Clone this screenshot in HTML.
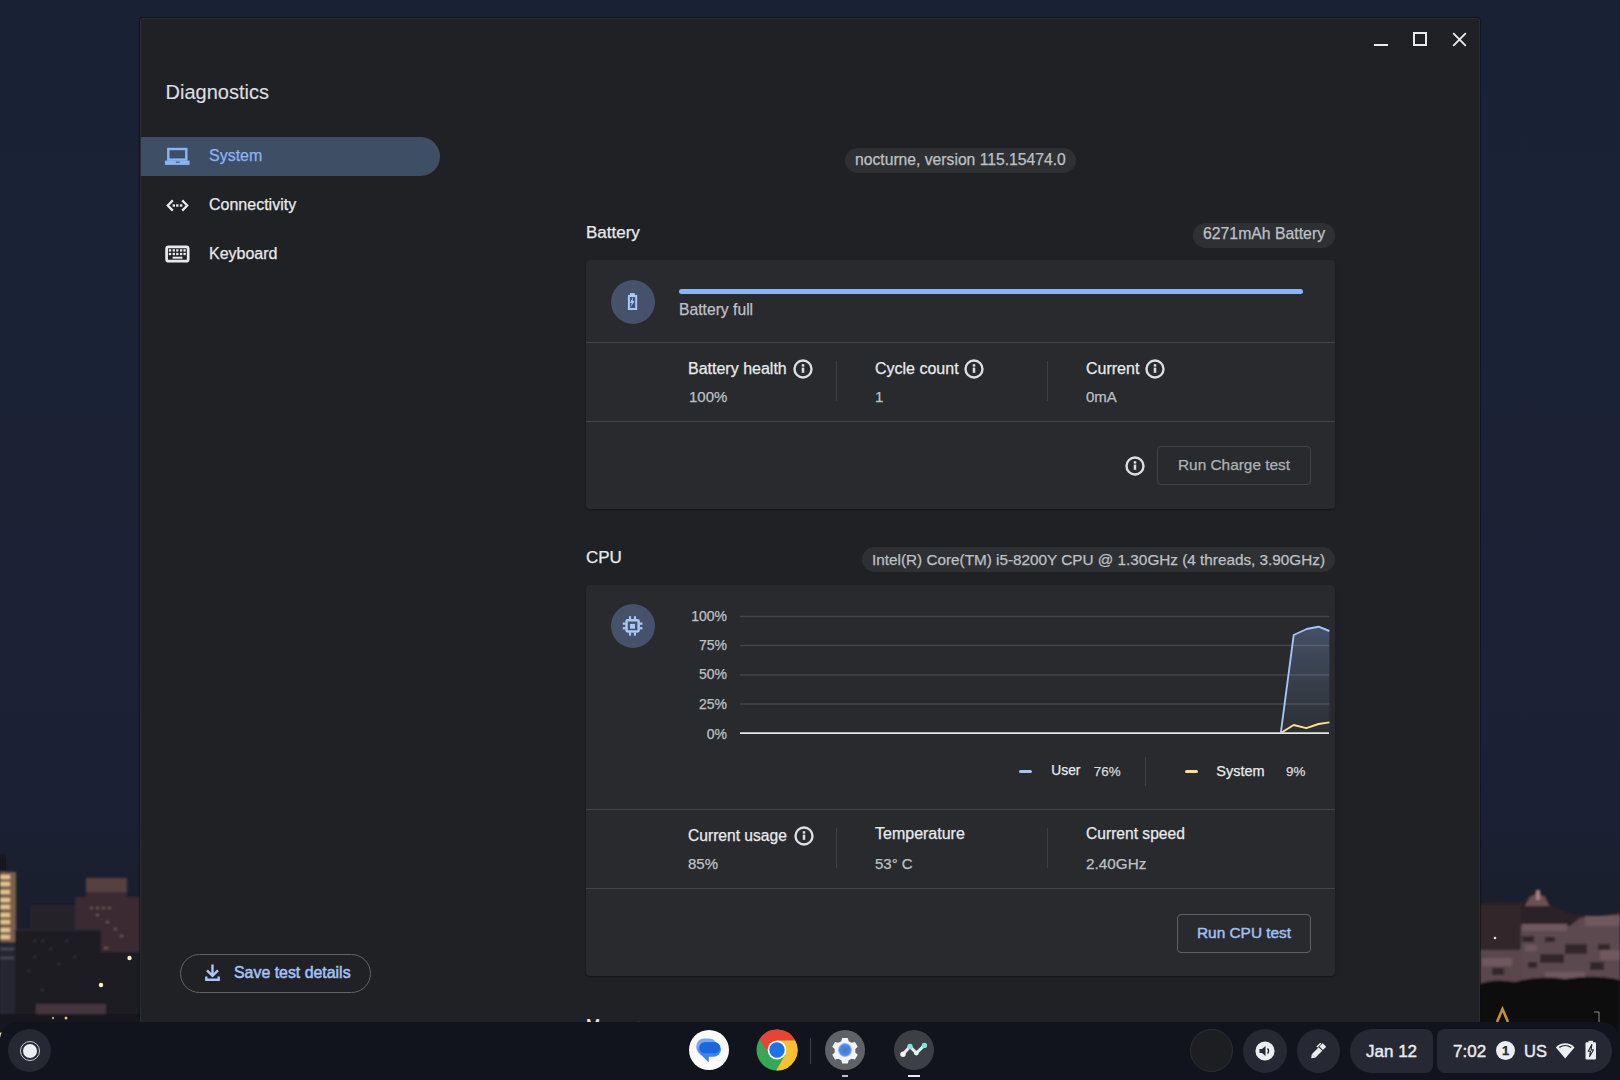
<!DOCTYPE html>
<html><head><meta charset="utf-8">
<style>
*{box-sizing:border-box;margin:0;padding:0}
html,body{width:1620px;height:1080px;overflow:hidden}
body{position:relative;font-family:"Liberation Sans",sans-serif;background:linear-gradient(180deg,#192135 0%,#1a2234 45%,#1b2134 75%,#1a1f2e 82%);}
.a{position:absolute}
.t{position:absolute;white-space:nowrap;line-height:1.2;-webkit-text-stroke:0.25px currentColor}
#win{position:absolute;left:140px;top:18px;width:1340px;height:1062px;background:#202124;border:1px solid #2b2d33;border-bottom:none;border-radius:3px 3px 0 0;box-shadow:0 0 1px 1px rgba(10,12,20,.6)}
.card{position:absolute;left:586px;width:749px;background:#292a2d;border-radius:4px;box-shadow:0 1px 2px rgba(0,0,0,.4)}
.chip{position:absolute;height:25px;border-radius:13px;background:#2f3034}
.hr{position:absolute;height:1.3px;background:#434448}
.vr{position:absolute;width:1.2px;background:#3f4044}
.shelf{position:absolute;left:0;top:1022px;width:1620px;height:58px;background:#11131d;border-radius:18px 18px 0 0}
.circ{position:absolute;border-radius:50%}
</style></head>
<body>

<svg class="a" style="left:0;top:840px" width="141" height="210" viewBox="0 840 141 210">
<defs><filter id="bl" x="-10%" y="-10%" width="120%" height="120%"><feGaussianBlur stdDeviation="0.9"/></filter></defs>
<g filter="url(#bl)">
<rect x="0" y="855" width="6" height="18" fill="#12161f"/>
<rect x="0" y="872" width="16" height="70" fill="#7a6048"/>
<g fill="#e6c690"><rect x="0" y="875" width="10" height="4"/><rect x="0" y="882" width="10" height="4"/><rect x="0" y="890" width="10" height="4"/><rect x="0" y="898" width="10" height="4"/><rect x="0" y="905" width="10" height="4"/><rect x="0" y="913" width="10" height="4"/><rect x="0" y="920" width="10" height="4"/><rect x="0" y="928" width="10" height="4"/><rect x="0" y="935" width="10" height="4"/></g>
<rect x="0" y="942" width="16" height="80" fill="#262833"/>
<g fill="#4a4c58"><rect x="0" y="948" width="14" height="2"/><rect x="0" y="957" width="14" height="2"/></g>
<rect x="30" y="905" width="48" height="30" fill="#27232c"/>
<path d="M75 1010V897H86V878H127V897H141V1010Z" fill="#3a2b31"/>
<rect x="86" y="878" width="41" height="14" fill="#57413f"/>
<g fill="#6e5650"><rect x="90" y="907" width="3" height="2"/><rect x="96" y="907" width="3" height="2"/><rect x="102" y="907" width="3" height="2"/><rect x="108" y="907" width="3" height="2"/><rect x="96" y="914" width="3" height="2"/><rect x="106" y="921" width="3" height="2"/><rect x="114" y="928" width="3" height="2"/><rect x="104" y="947" width="4" height="2"/><rect x="120" y="935" width="3" height="2"/></g>
<rect x="15" y="929" width="86" height="85" fill="#1d1b23"/>
<rect x="15" y="929" width="86" height="2" fill="#2a2630"/>
<g fill="#34303a"><rect x="33" y="940" width="3" height="2"/><rect x="41" y="940" width="3" height="2"/><rect x="49" y="948" width="3" height="2"/><rect x="33" y="956" width="3" height="2"/><rect x="57" y="963" width="3" height="2"/><rect x="41" y="989" width="3" height="2"/><rect x="27" y="970" width="3" height="2"/><rect x="65" y="940" width="3" height="2"/><rect x="73" y="956" width="3" height="2"/></g>
<rect x="101" y="952" width="40" height="62" fill="#1c1a21"/>
<rect x="36" y="1004" width="70" height="10" fill="#45363d"/>
<rect x="0" y="1014" width="141" height="36" fill="#15131a"/>
</g>
<circle cx="129.5" cy="958" r="2.2" fill="#fff1c0"/><circle cx="101" cy="985" r="2.2" fill="#fff1c0"/>
<circle cx="66" cy="1018" r="1.5" fill="#e8c070"/><circle cx="53" cy="1018" r="1.2" fill="#c8a060"/><circle cx="1" cy="1035" r="2.5" fill="#f5e0b0"/>
</svg>
<svg class="a" style="left:1479px;top:860px" width="141" height="190" viewBox="1479 860 141 190">
<defs><filter id="br" x="-10%" y="-10%" width="120%" height="120%"><feGaussianBlur stdDeviation="1.1"/></filter></defs>
<g filter="url(#br)">
<path d="M1479 1050V903L1522 902L1528 896L1536 892L1546 896L1552 906L1572 914L1600 917L1620 911V1050Z" fill="#2a2127"/>
<path d="M1525 906L1530 897L1538 893L1545 897L1549 906Z" fill="#6a5052"/>
<rect x="1536" y="890" width="4" height="10" fill="#a88080"/>
<path d="M1520 926H1570L1580 918L1620 914V982H1520Z" fill="#5c4850"/>
<path d="M1479 950H1522V984H1479Z" fill="#5a474e"/>
<g fill="#70595f"><rect x="1522" y="924" width="45" height="7"/><rect x="1585" y="916" width="35" height="10"/><rect x="1482" y="958" width="30" height="8"/><rect x="1545" y="972" width="40" height="7"/><rect x="1600" y="950" width="20" height="10"/><rect x="1525" y="945" width="12" height="6"/></g>
<g fill="#30262c"><rect x="1522" y="936" width="12" height="6"/><rect x="1545" y="937" width="10" height="5"/><rect x="1565" y="944" width="22" height="10"/><rect x="1540" y="954" width="24" height="9"/><rect x="1598" y="944" width="12" height="6"/><rect x="1492" y="968" width="12" height="7"/><rect x="1528" y="962" width="9" height="6"/><rect x="1590" y="962" width="14" height="8"/><rect x="1479" y="905" width="42" height="44"/></g>
<path d="M1479 1050V984Q1495 978 1515 982Q1540 975 1565 979Q1595 974 1620 980V1050Z" fill="#0e0c10"/>
</g>
<circle cx="1495" cy="938" r="1.3" fill="#f0e0d0"/>
<path d="M1497 1022L1502.5 1009L1508 1022" fill="none" stroke="#c8902a" stroke-width="2.6"/>
<path d="M1594 1012H1599V1022" fill="none" stroke="#8a8a90" stroke-width="1"/>
</svg>
<div id="win"></div>
<div class="a" style="left:1374px;top:44px;width:14px;height:2px;background:#e8eaed"></div>
<div class="a" style="left:1413px;top:32px;width:14px;height:14px;border:2px solid #e8eaed"></div>
<svg class="a" style="left:1450px;top:30px" width="18" height="18" viewBox="0 0 18 18"><path d="M3.2 3.2L15.8 15.8M15.8 3.2L3.2 15.8" stroke="#e8eaed" stroke-width="1.9"/></svg>
<div class="t" style="left:165.5px;top:79.77px;font-size:20px;color:#dcdee1;-webkit-text-stroke:0.15px">Diagnostics</div>
<div class="a" style="left:141px;top:137px;width:299px;height:39px;background:#3e4e64;border-radius:0 20px 20px 0"></div>
<svg class="a" style="left:160px;top:140px" width="35" height="35" viewBox="0 0 35 35"><rect x="8.3" y="9" width="18" height="10.6" fill="none" stroke="#8ab4f8" stroke-width="2.4"/><rect x="4.9" y="20.6" width="24.7" height="4.3" fill="#8ab4f8"/><rect x="15.9" y="21.6" width="3.9" height="1.1" fill="#3e4e64"/></svg>
<div class="t" style="left:209px;top:146.46px;font-size:16px;color:#8ab4f8;">System</div>
<svg class="a" style="left:160px;top:187px" width="35" height="35" viewBox="0 0 35 35"><path d="M12.8 13.4L7.8 18.5L12.8 23.6M22.2 13.4L27.2 18.5L22.2 23.6" fill="none" stroke="#e8eaed" stroke-width="2.3"/><rect x="12.6" y="17.3" width="2.4" height="2.4" fill="#e8eaed"/><rect x="16.1" y="17.3" width="2.4" height="2.4" fill="#e8eaed"/><rect x="19.9" y="17.3" width="2.4" height="2.4" fill="#e8eaed"/></svg>
<div class="t" style="left:209px;top:195.46px;font-size:16px;color:#e8eaed;">Connectivity</div>
<svg class="a" style="left:160px;top:236px" width="35" height="35" viewBox="0 0 35 35"><rect x="6.6" y="10.8" width="21.6" height="14.4" rx="2" fill="none" stroke="#e8eaed" stroke-width="2.7"/><g fill="#e8eaed"><rect x="8.85" y="13.25" width="2.3" height="2.3"/><rect x="12.65" y="13.25" width="2.3" height="2.3"/><rect x="16.15" y="13.25" width="2.3" height="2.3"/><rect x="19.95" y="13.25" width="2.3" height="2.3"/><rect x="23.45" y="13.25" width="2.3" height="2.3"/><rect x="8.85" y="16.85" width="2.3" height="2.3"/><rect x="12.65" y="16.85" width="2.3" height="2.3"/><rect x="16.15" y="16.85" width="2.3" height="2.3"/><rect x="19.95" y="16.85" width="2.3" height="2.3"/><rect x="23.45" y="16.85" width="2.3" height="2.3"/><rect x="12.6" y="20.7" width="9.8" height="2"/></g></svg>
<div class="t" style="left:209px;top:244.26px;font-size:16px;color:#e8eaed;">Keyboard</div>
<div class="chip" style="left:845px;top:148px;width:231px"></div>
<div class="t" style="left:855px;top:150.54px;font-size:15.7px;color:#bdc1c6;">nocturne, version 115.15474.0</div>
<div class="t" style="left:586px;top:223.31px;font-size:17px;color:#e8eaed;">Battery</div>
<div class="chip" style="left:1193px;top:223px;width:142px"></div>
<div class="t" style="left:1203px;top:225.05px;font-size:15.8px;color:#bdc1c6;">6271mAh Battery</div>
<div class="card" style="top:260px;height:249px"></div>
<div class="circ" style="left:611px;top:280px;width:44px;height:44px;background:#45526a"></div>
<svg class="a" style="left:621px;top:291px" width="20" height="22" viewBox="0 0 20 22"><path d="M6.9 4.9h9.3v13.1H6.9z" fill="#3a5680" fill-opacity=".35"/><path d="M7.9 4.9h7.3v13.1h-7.3z" fill="none" stroke="#a8c7fa" stroke-width="2"/><rect x="8.9" y="2.1" width="5" height="2.3" fill="#a8c7fa"/><path d="M12.2 5.8L8.9 11.9H10.8L9.4 16.6L13.6 9.9H11.6z" fill="#a8c7fa"/></svg>
<div class="a" style="left:679px;top:289px;width:624px;height:5px;border-radius:3px;background:#8ab4f8"></div>
<div class="t" style="left:679px;top:301.14px;font-size:15.7px;color:#bdc1c6;">Battery full</div>
<div class="hr" style="left:586px;top:342px;width:749px"></div>
<div class="t" style="left:688px;top:358.76px;font-size:16px;color:#e8eaed;">Battery health</div>
<svg class="a" style="left:792.7px;top:358.6px" width="20" height="20" viewBox="0 0 20 20"><circle cx="10" cy="10" r="8.5" fill="none" stroke="#dcdee2" stroke-width="2.4"/><rect x="8.75" y="8.6" width="2.5" height="5.2" fill="#dcdee2"/><rect x="8.75" y="5.2" width="2.5" height="2.4" fill="#dcdee2"/></svg>
<div class="t" style="left:689px;top:387.50px;font-size:15px;color:#bdc1c6;">100%</div>
<div class="vr" style="left:836px;top:361px;height:40px"></div>
<div class="t" style="left:875px;top:358.76px;font-size:16px;color:#e8eaed;">Cycle count</div>
<svg class="a" style="left:964px;top:358.6px" width="20" height="20" viewBox="0 0 20 20"><circle cx="10" cy="10" r="8.5" fill="none" stroke="#dcdee2" stroke-width="2.4"/><rect x="8.75" y="8.6" width="2.5" height="5.2" fill="#dcdee2"/><rect x="8.75" y="5.2" width="2.5" height="2.4" fill="#dcdee2"/></svg>
<div class="t" style="left:875px;top:387.50px;font-size:15px;color:#bdc1c6;">1</div>
<div class="vr" style="left:1047px;top:361px;height:40px"></div>
<div class="t" style="left:1086px;top:358.76px;font-size:16px;color:#e8eaed;">Current</div>
<svg class="a" style="left:1145px;top:358.6px" width="20" height="20" viewBox="0 0 20 20"><circle cx="10" cy="10" r="8.5" fill="none" stroke="#dcdee2" stroke-width="2.4"/><rect x="8.75" y="8.6" width="2.5" height="5.2" fill="#dcdee2"/><rect x="8.75" y="5.2" width="2.5" height="2.4" fill="#dcdee2"/></svg>
<div class="t" style="left:1086px;top:387.50px;font-size:15px;color:#bdc1c6;">0mA</div>
<div class="hr" style="left:586px;top:421px;width:749px"></div>
<svg class="a" style="left:1125px;top:456px" width="20" height="20" viewBox="0 0 20 20"><circle cx="10" cy="10" r="8.5" fill="none" stroke="#dcdee2" stroke-width="2.4"/><rect x="8.75" y="8.6" width="2.5" height="5.2" fill="#dcdee2"/><rect x="8.75" y="5.2" width="2.5" height="2.4" fill="#dcdee2"/></svg>
<div class="a" style="left:1157px;top:446px;width:154px;height:39px;border:1px solid #424347;border-radius:4px"></div>
<div class="t" style="left:1178px;top:456.42px;font-size:15.4px;color:#aeb2b7;">Run Charge test</div>
<div class="t" style="left:586px;top:547.91px;font-size:17px;color:#e8eaed;">CPU</div>
<div class="chip" style="left:862px;top:547px;width:473px"></div>
<div class="t" style="left:872px;top:550.52px;font-size:15.3px;color:#bdc1c6;">Intel(R) Core(TM) i5-8200Y CPU @ 1.30GHz (4 threads, 3.90GHz)</div>
<div class="card" style="top:585px;height:391px"></div>
<div class="circ" style="left:611px;top:604px;width:44px;height:44px;background:#45526a"></div>
<svg class="a" style="left:620px;top:613px" width="25" height="25" viewBox="0 0 25 25"><rect x="6.55" y="7.25" width="12.1" height="11.2" rx="1.2" fill="none" stroke="#a8c7fa" stroke-width="2.5"/><rect x="10" y="10.9" width="5" height="4.8" fill="#a8c7fa"/><g fill="#a8c7fa"><rect x="9" y="3.2" width="2.1" height="3"/><rect x="9" y="19.5" width="2.1" height="3.2"/><rect x="13.9" y="3.2" width="2.1" height="3"/><rect x="13.9" y="19.5" width="2.1" height="3.2"/><rect x="2.8" y="9.5" width="2.8" height="2.3"/><rect x="19.6" y="9.5" width="2.8" height="2.3"/><rect x="2.8" y="14.1" width="2.8" height="2.3"/><rect x="19.6" y="14.1" width="2.8" height="2.3"/></g></svg>
<div class="t" style="left:627px;width:100px;text-align:right;top:608.25px;font-size:14px;color:#bdc1c6">100%</div>
<div class="t" style="left:627px;width:100px;text-align:right;top:637.45px;font-size:14px;color:#bdc1c6">75%</div>
<div class="t" style="left:627px;width:100px;text-align:right;top:666.45px;font-size:14px;color:#bdc1c6">50%</div>
<div class="t" style="left:627px;width:100px;text-align:right;top:696.25px;font-size:14px;color:#bdc1c6">25%</div>
<div class="t" style="left:627px;width:100px;text-align:right;top:725.55px;font-size:14px;color:#bdc1c6">0%</div>
<svg class="a" style="left:586px;top:585px" width="749" height="224" viewBox="586 585 749 224">
<defs><linearGradient id="uf" x1="0" y1="0" x2="0" y2="1"><stop offset="0" stop-color="#8ab4f8" stop-opacity=".28"/><stop offset="1" stop-color="#8ab4f8" stop-opacity=".03"/></linearGradient></defs>
<g stroke="#434549" stroke-width="1.5"><path d="M740 616.5H1329M740 645.5H1329M740 675H1329M740 704H1329"/></g>
<path d="M1280.8 733L1293.7 635L1306.7 629L1318.6 626.7L1329.4 631V733Z" fill="url(#uf)"/>
<path d="M740 733.2H1329" stroke="#e3e5e8" stroke-width="1.8"/>
<path d="M1280.8 733L1293.7 635L1306.7 629L1318.6 626.7L1329.4 631" fill="none" stroke="#a5c5fa" stroke-width="1.9" stroke-linejoin="round"/>
<path d="M1280.8 733L1293.7 725L1306.3 728.2L1318.6 724L1329.4 722.4" fill="none" stroke="#fde08a" stroke-width="1.9" stroke-linejoin="round"/>
</svg>
<div class="a" style="left:1019px;top:770px;width:12.6px;height:3.3px;border-radius:1.5px;background:#a5c5fa"></div>
<div class="t" style="left:1051.3px;top:763.44px;font-size:13.8px;color:#e8eaed;">User</div>
<div class="t" style="left:1093.8px;top:763.82px;font-size:13.4px;color:#d8dadd;">76%</div>
<div class="vr" style="left:1145px;top:757px;height:29px"></div>
<div class="a" style="left:1185px;top:770px;width:12.6px;height:3.3px;border-radius:1.5px;background:#fde08a"></div>
<div class="t" style="left:1216.3px;top:762.78px;font-size:14.5px;color:#e8eaed;">System</div>
<div class="t" style="left:1286px;top:763.82px;font-size:13.4px;color:#d8dadd;">9%</div>
<div class="hr" style="left:586px;top:809px;width:749px"></div>
<div class="t" style="left:688px;top:827.23px;font-size:15.6px;color:#e8eaed;">Current usage</div>
<svg class="a" style="left:793.5px;top:825.7px" width="20" height="20" viewBox="0 0 20 20"><circle cx="10" cy="10" r="8.5" fill="none" stroke="#dcdee2" stroke-width="2.4"/><rect x="8.75" y="8.6" width="2.5" height="5.2" fill="#dcdee2"/><rect x="8.75" y="5.2" width="2.5" height="2.4" fill="#dcdee2"/></svg>
<div class="t" style="left:688px;top:855.20px;font-size:15px;color:#bdc1c6;">85%</div>
<div class="vr" style="left:836px;top:828px;height:40px"></div>
<div class="t" style="left:875px;top:824.46px;font-size:16px;color:#e8eaed;">Temperature</div>
<div class="t" style="left:875px;top:855.20px;font-size:15px;color:#bdc1c6;">53° C</div>
<div class="vr" style="left:1047px;top:828px;height:40px"></div>
<div class="t" style="left:1086px;top:824.83px;font-size:15.6px;color:#e8eaed;">Current speed</div>
<div class="t" style="left:1086px;top:854.92px;font-size:15.3px;color:#bdc1c6;">2.40GHz</div>
<div class="hr" style="left:586px;top:888px;width:749px"></div>
<div class="a" style="left:1177px;top:914px;width:134px;height:39px;border:1px solid #5f6368;border-radius:4px"></div>
<div class="t" style="left:1197px;top:923.62px;font-size:15.4px;color:#9ec1f9;-webkit-text-stroke:0.45px">Run CPU test</div>
<div class="t" style="left:586px;top:1015.91px;font-size:17px;color:#e8eaed;">Memory</div>
<div class="a" style="left:180px;top:954px;width:191px;height:39px;border:1.4px solid #606367;border-radius:20px"></div>
<svg class="a" style="left:200px;top:960px" width="25" height="25" viewBox="0 0 25 25"><path d="M12.5 4.4V15M7 10.3L12.5 15.8L18 10.3M6.3 16.6V19.8H18.7V16.6" fill="none" stroke="#a8c7fa" stroke-width="2.4"/></svg>
<div class="t" style="left:234px;top:962.95px;font-size:15.9px;color:#a3c4fa;-webkit-text-stroke:0.5px">Save test details</div>
<div class="shelf"></div>
<div class="circ" style="left:8px;top:1029px;width:43px;height:43px;background:#262933"></div>
<div class="circ" style="left:19.5px;top:1040.5px;width:20px;height:20px;border:1.6px solid #c9cbd0"></div>
<div class="circ" style="left:22.5px;top:1043.5px;width:14px;height:14px;background:#eceef2"></div>
<div class="circ" style="left:689px;top:1030px;width:40px;height:40px;background:#fdfdfd"></div>
<svg class="a" style="left:689px;top:1030px" width="40" height="40" viewBox="0 0 40 40"><rect x="7.2" y="8.5" width="20.9" height="16.5" rx="8" fill="#78a5f5"/><rect x="9.3" y="11.9" width="22.7" height="14.8" rx="7.4" fill="#3f82f1"/><path d="M12.2 24.8L20 26.4L19.6 32.6Z" fill="#3f82f1"/><rect x="10.6" y="12.3" width="20.4" height="11" rx="5.5" fill="#1a66dc"/></svg>
<svg class="a" style="left:756px;top:1029px" width="42" height="42" viewBox="0 0 42 42"><circle cx="21" cy="21" r="20.5" fill="#34a853"/><path d="M21 11.6L39.2 11.5A20.5 20.5 0 0 0 3.6999999999999993 10L12.86 25.7Z" fill="#ea4335"/><path d="M29.14 25.7L20.13 41.5A20.5 20.5 0 0 0 39.2 11.5L21 11.6Z" fill="#fbc02d"/><circle cx="21" cy="21" r="9.4" fill="#fff"/><circle cx="21" cy="21" r="7.7" fill="#1a73e8"/></svg>
<div class="a" style="left:810px;top:1038px;width:1px;height:26px;background:#3c4048"></div>
<div class="circ" style="left:825px;top:1030px;width:40px;height:40px;background:#5f6368"></div>
<svg class="a" style="left:825px;top:1030px" width="40" height="40" viewBox="0 0 40 40"><defs><radialGradient id="sg"><stop offset="0" stop-color="#8a7050"/><stop offset=".3" stop-color="#3f7fe8"/><stop offset=".75" stop-color="#4a8af4"/><stop offset="1" stop-color="#cfe0fb"/></radialGradient></defs><g transform="translate(20 20) scale(0.93)"><path fill="#f4f5f7" d="M-3 -13h6l1 3.5l3.2 1.8l3.5-1l3 5.2l-2.6 2.5v3.6l2.6 2.5l-3 5.2l-3.5-1l-3.2 1.8l-1 3.5h-6l-1-3.5l-3.2-1.8l-3.5 1l-3-5.2l2.6-2.5v-3.6l-2.6-2.5l3-5.2l3.5 1l3.2-1.8z"/><circle r="7.8" fill="url(#sg)"/></g></svg>
<div class="a" style="left:842px;top:1075px;width:6px;height:2px;background:#bdc1c6"></div>
<div class="circ" style="left:894px;top:1030px;width:40px;height:40px;background:#3c3f44"></div>
<svg class="a" style="left:894px;top:1030px" width="40" height="40" viewBox="0 0 40 40"><defs><linearGradient id="dg" x1="0" x2="1"><stop offset="0" stop-color="#f3e6ee"/><stop offset="1" stop-color="#c9f3ef"/></linearGradient></defs><path d="M9 24.3L16 16.5L22.3 23.1L30.4 15.4" fill="none" stroke="url(#dg)" stroke-width="3"/><circle cx="9" cy="24.3" r="2.7" fill="#f4f4f6"/><circle cx="16" cy="16.5" r="2.7" fill="#7de8df"/><circle cx="22.3" cy="23.1" r="2.4" fill="#e6f5f2"/><circle cx="30.4" cy="15.4" r="2.7" fill="#7de8df"/></svg>
<div class="a" style="left:908px;top:1075px;width:12px;height:2px;background:#e8eaed"></div>
<div class="circ" style="left:1190px;top:1029px;width:43px;height:43px;background:#1d1e21;border:1.5px solid #2c2f38"></div>
<div class="circ" style="left:1243px;top:1029px;width:44px;height:44px;background:#262933"></div>
<svg class="a" style="left:1253px;top:1039px" width="24" height="24" viewBox="0 0 24 24"><circle cx="12" cy="12" r="9.6" fill="#eceef2"/><path d="M6.5 10h2.5l3.5-3v10l-3.5-3H6.5z" fill="#262933"/><path d="M14.5 9.5a3.5 3.5 0 0 1 0 5" fill="none" stroke="#262933" stroke-width="1.4"/></svg>
<div class="circ" style="left:1297px;top:1029px;width:43px;height:44px;background:#262933"></div>
<svg class="a" style="left:1306px;top:1039px" width="25" height="24" viewBox="0 0 25 24"><g transform="rotate(45 12.5 12)" fill="#eceef2"><rect x="10" y="9.2" width="5" height="9.8"/><path d="M10 19L12.5 22.3L15 19Z"/><rect x="10" y="3.6" width="5" height="4.6"/><rect x="7.9" y="4.8" width="1.4" height="5.6"/></g></svg>
<div class="a" style="left:1350px;top:1029px;width:83px;height:44px;border-radius:22px 8px 8px 22px;background:#262933"></div>
<div class="t" style="left:1366px;top:1041.51px;font-size:17px;color:#e8eaed;-webkit-text-stroke:0.45px">Jan 12</div>
<div class="a" style="left:1437px;top:1029px;width:175px;height:44px;border-radius:8px 22px 22px 8px;background:#262933"></div>
<div class="t" style="left:1453px;top:1041.51px;font-size:17px;color:#e8eaed;-webkit-text-stroke:0.45px">7:02</div>
<div class="circ" style="left:1496px;top:1041px;width:19px;height:19px;background:#eceef2"></div>
<div class="t" style="left:1496px;top:1041px;width:19px;text-align:center;font-size:13px;font-weight:bold;line-height:19px;color:#262933">1</div>
<div class="t" style="left:1524px;top:1041.98px;font-size:16.5px;color:#e8eaed;-webkit-text-stroke:0.45px">US</div>
<svg class="a" style="left:1555px;top:1042px" width="21" height="18" viewBox="0 0 21 18"><path d="M10.2 16.6L0.9 5.4A12.4 12.4 0 0 1 19.5 5.4Z" fill="#eceef2"/><path d="M4.2 5.6A10.1 10.1 0 0 1 16.2 5.6" fill="none" stroke="#262933" stroke-width="1.3"/></svg>
<svg class="a" style="left:1583px;top:1039px" width="16" height="23" viewBox="0 0 16 23"><rect x="2.5" y="3.2" width="10.5" height="17.4" rx="1.3" fill="#eceef2"/><rect x="5.5" y="1.8" width="4.5" height="2" fill="#eceef2"/><path d="M8.8 5.6L5.3 12.2H7.5L6.6 17.6L10.4 10.9H8.2Z" fill="none" stroke="#262933" stroke-width="1.1" stroke-linejoin="round"/></svg>
</body></html>
